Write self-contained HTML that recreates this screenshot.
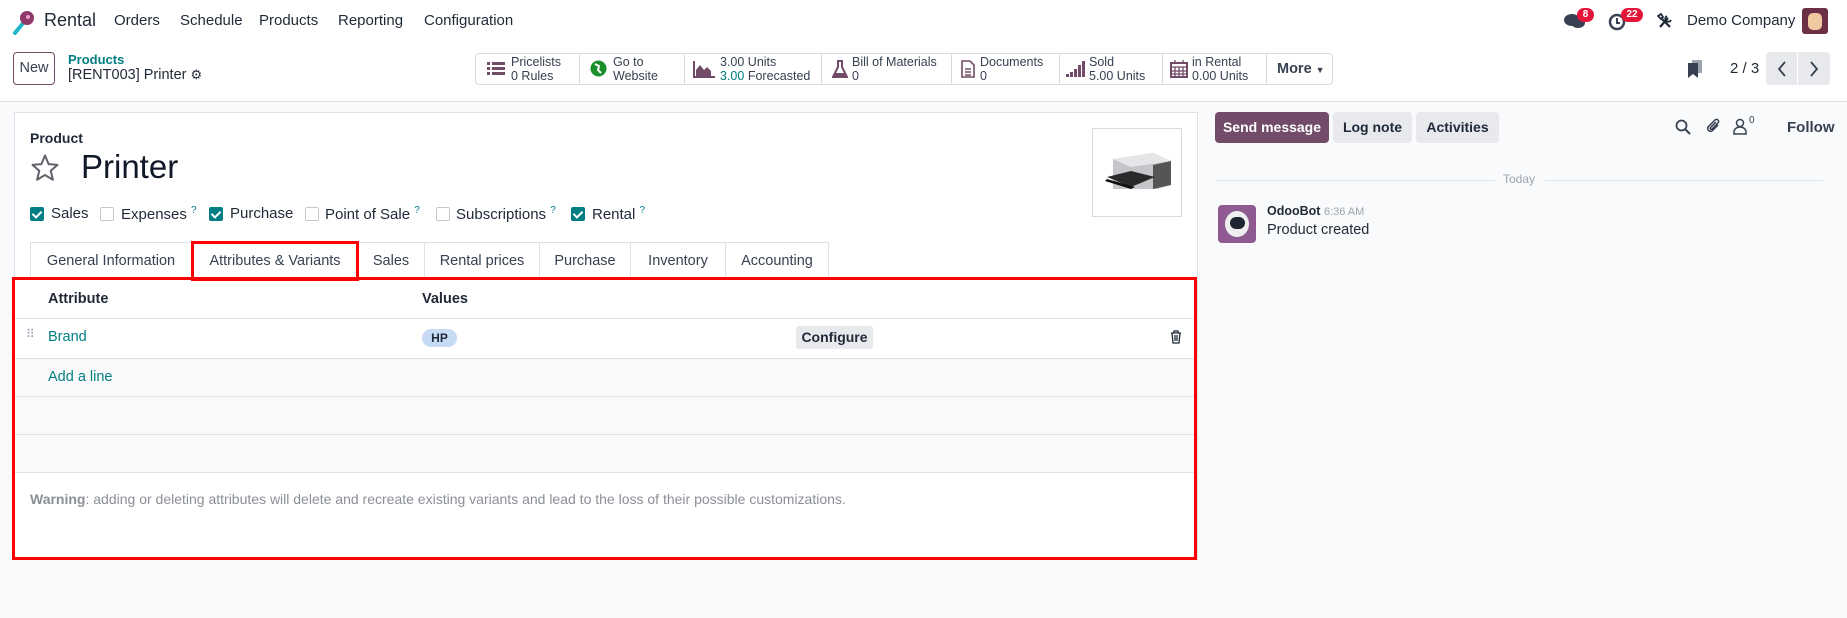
<!DOCTYPE html>
<html><head><meta charset="utf-8"><style>
*{box-sizing:border-box;margin:0;padding:0}
body{width:1847px;height:618px;overflow:hidden;background:#f9fafb;font-family:"Liberation Sans",sans-serif;color:#374151;position:relative;font-size:14.5px}
.a{position:absolute;white-space:nowrap}
.top{position:absolute;left:0;top:0;width:1847px;height:102px;background:#fff;border-bottom:1px solid #dee2e6}
.menu{font-size:15px;color:#1f2937;top:12px}
.stat{position:absolute;top:53px;height:32px;left:475px;width:858px;border:1px solid #d8dadd;border-radius:4px;background:#fff}
.sb{position:absolute;top:0;height:30px;border-left:1px solid #d8dadd;font-size:12.5px;line-height:14px;color:#374151;padding-top:1px}
.sb b{font-weight:normal;display:block}
.sheet{position:absolute;left:14px;top:112px;width:1184px;height:448px;background:#fff;border:1px solid #dee2e6}
.cb{position:absolute;top:207px;width:14px;height:14px;border-radius:2px}
.cb.on{background:#017e84}
.cb.on:after{content:"";position:absolute;left:4px;top:2px;width:4px;height:7px;border:solid #fff;border-width:0 2px 2px 0;transform:rotate(45deg)}
.cb.off{border:1px solid #c4c8cd;background:#fff}
.lbl{top:205px;font-size:15px;color:#1f2937}
.lbl sup{color:#017e84;font-size:10px}
.tab{position:absolute;top:242px;height:37px;border:1px solid #dee2e6;border-bottom:none;font-size:14.5px;color:#374151;text-align:center;line-height:36px;background:#fff}
.row{position:absolute;left:14px;width:1182px;border-bottom:1px solid #dee2e6}
.btn{position:absolute;top:112px;height:31px;border-radius:4px;font-size:14px;font-weight:bold;text-align:center;line-height:31px}
</style></head><body>
<div class="top"></div>
<svg class="a" style="left:12px;top:9px" width="24" height="26" viewBox="0 0 24 26"><path d="M3 24 L12 13" stroke="#21b6c8" stroke-width="4" stroke-linecap="round"/><circle cx="15" cy="9" r="7" fill="#8e3a6b"/><circle cx="16" cy="8" r="2" fill="#f3a0c6"/></svg>
<div class="a" style="left:44px;top:10px;font-size:18px;color:#1f2937">Rental</div>
<div class="a menu" style="left:114px">Orders</div>
<div class="a menu" style="left:180px">Schedule</div>
<div class="a menu" style="left:259px">Products</div>
<div class="a menu" style="left:338px">Reporting</div>
<div class="a menu" style="left:424px">Configuration</div>
<svg class="a" style="left:1563px;top:12px" width="24" height="18" viewBox="0 0 24 18"><ellipse cx="9" cy="8" rx="8" ry="6" fill="#374151"/><ellipse cx="15" cy="11" rx="7" ry="5" fill="#374151"/></svg>
<div class="a" style="left:1577px;top:8px;width:17px;height:14px;border-radius:7px;background:#e4153a;color:#fff;font-size:10px;font-weight:bold;text-align:center;line-height:14px">8</div>
<svg class="a" style="left:1608px;top:13px" width="18" height="18" viewBox="0 0 18 18"><circle cx="9" cy="9" r="7" fill="none" stroke="#374151" stroke-width="2.5"/><path d="M9 5v5h3" stroke="#374151" stroke-width="2" fill="none"/></svg>
<div class="a" style="left:1621px;top:8px;width:22px;height:14px;border-radius:7px;background:#e4153a;color:#fff;font-size:10px;font-weight:bold;text-align:center;line-height:14px">22</div>
<svg class="a" style="left:1657px;top:13px" width="16" height="16" viewBox="0 0 16 16"><path d="M3 14L11 5M13 14L4 5" stroke="#1f2937" stroke-width="2.2"/><path d="M1 3l3-2 2 3-2 2zM10 3a3 3 0 104 4" stroke="#1f2937" stroke-width="1.8" fill="none"/></svg>
<div class="a" style="left:1687px;top:12px;font-size:15px;color:#1f2937">Demo Company</div>
<div class="a" style="left:1802px;top:8px;width:26px;height:26px;border-radius:3px;background:#6b2f46"><div style="margin:5px 6px;width:14px;height:17px;background:#f1c9a0;border-radius:5px"></div></div>
<div class="a" style="left:13px;top:52px;width:42px;height:33px;border:1px solid #714b67;border-radius:4px;font-size:14.5px;color:#374151;text-align:center;line-height:31px">New</div>
<div class="a" style="left:68px;top:52px;font-size:13px;font-weight:bold;color:#017e84">Products</div>
<div class="a" style="left:68px;top:67px;font-size:14.5px;color:#1f2937">[RENT003] Printer <span style="font-size:13px">⚙</span></div>
<div class="stat">
 <div class="sb" style="left:-1px;width:104px;border:none;padding-left:36px"><svg style="position:absolute;left:12px;top:7px" width="18" height="16"><g fill="#714b67"><rect x="0" y="1" width="3" height="3"/><rect x="5" y="1" width="13" height="3"/><rect x="0" y="6" width="3" height="3"/><rect x="5" y="6" width="13" height="3"/><rect x="0" y="11" width="3" height="3"/><rect x="5" y="11" width="13" height="3"/></g></svg><b>Pricelists</b><b>0 Rules</b></div>
 <div class="sb" style="left:103px;width:105px;padding-left:33px"><svg style="position:absolute;left:10px;top:6px" width="17" height="17"><circle cx="8.5" cy="8.5" r="8" fill="#1a8f2c"/><path d="M5 4l4 2-1 4 3 3" stroke="#fff" stroke-width="2" fill="none"/></svg><b>Go to</b><b>Website</b></div>
 <div class="sb" style="left:208px;width:137px;padding-left:35px"><svg style="position:absolute;left:8px;top:7px" width="22" height="17"><path d="M1 0v16h21" stroke="#714b67" stroke-width="2" fill="none"/><path d="M3 15V9l4-5 4 5 3-3 4 4v5z" fill="#714b67"/></svg><b>3.00 Units</b><b><span style="color:#017e84">3.00</span> Forecasted</b></div>
 <div class="sb" style="left:345px;width:130px;padding-left:30px"><svg style="position:absolute;left:10px;top:6px" width="16" height="18"><path d="M5 1h6M6 1v6L1 17h14L10 7V1" stroke="#714b67" stroke-width="2" fill="none"/><path d="M3 13h10l1 3H2z" fill="#714b67"/></svg><b>Bill of Materials</b><b>0</b></div>
 <div class="sb" style="left:475px;width:108px;padding-left:28px"><svg style="position:absolute;left:9px;top:6px" width="14" height="18"><path d="M1 1h8l4 4v12H1z" stroke="#714b67" stroke-width="1.6" fill="none"/><path d="M4 9h6M4 12h6M4 15h6" stroke="#714b67" stroke-width="1.4"/></svg><b>Documents</b><b>0</b></div>
 <div class="sb" style="left:583px;width:103px;padding-left:29px"><svg style="position:absolute;left:6px;top:7px" width="20" height="16"><g fill="#714b67"><rect x="0" y="13" width="3" height="3"/><rect x="4" y="11" width="3" height="5"/><rect x="8" y="8" width="3" height="8"/><rect x="12" y="4" width="3" height="12"/><rect x="16" y="0" width="3" height="16"/></g></svg><b>Sold</b><b>5.00 Units</b></div>
 <div class="sb" style="left:686px;width:104px;padding-left:29px"><svg style="position:absolute;left:7px;top:6px" width="18" height="18"><rect x="1" y="3" width="16" height="14" fill="none" stroke="#714b67" stroke-width="2"/><path d="M1 7h16M5 7v10M9 7v10M13 7v10M1 11h16M1 14h16M5 0v4M13 0v4" stroke="#714b67" stroke-width="1.3"/></svg><b>in Rental</b><b>0.00 Units</b></div>
 <div class="sb" style="left:790px;width:67px;font-size:14.5px;font-weight:bold;line-height:29px;padding-left:10px">More <span style="font-size:9px">▼</span></div>
</div>
<svg class="a" style="left:1687px;top:60px" width="16" height="19"><rect x="5" y="0" width="10" height="13" fill="#9ca3af"/><path d="M1 3h10v15l-5-4-5 4z" fill="#374151"/></svg>
<div class="a" style="left:1730px;top:60px;font-size:15px;color:#1f2937">2 / 3</div>
<div class="a" style="left:1766px;top:52px;width:31px;height:33px;background:#e7e9ed;border-radius:4px 0 0 4px"></div>
<div class="a" style="left:1798px;top:52px;width:32px;height:33px;background:#e7e9ed;border-radius:0 4px 4px 0"></div>
<svg class="a" style="left:1776px;top:61px" width="12" height="16"><path d="M9 1L3 8l6 7" stroke="#374151" stroke-width="1.8" fill="none"/></svg>
<svg class="a" style="left:1808px;top:61px" width="12" height="16"><path d="M3 1l6 7-6 7" stroke="#374151" stroke-width="1.8" fill="none"/></svg>

<div class="sheet"></div>
<div class="a" style="left:30px;top:130px;font-size:14px;font-weight:bold;color:#1f2937">Product</div>
<svg class="a" style="left:30px;top:153px" width="30" height="30" viewBox="0 0 24 24"><path d="M12 2l2.9 6.9 7.1.6-5.4 4.7 1.7 7.2L12 17.6 5.7 21.4l1.7-7.2L2 9.5l7.1-.6z" fill="none" stroke="#5f636a" stroke-width="1.6" stroke-linejoin="round"/></svg>
<div class="a" style="left:81px;top:148px;font-size:33px;color:#111827">Printer</div>
<div class="a" style="left:1092px;top:128px;width:90px;height:89px;border:1px solid #d8dadd;background:#fff">
 <svg width="88" height="87" viewBox="0 0 88 87"><path d="M20 30l40-6 18 8v24l-14 4H20z" fill="#c4c6c9"/><path d="M20 30l40-6 18 8-40 6z" fill="#e5e6e8"/><path d="M60 36l18-4v24l-18 4z" fill="#555"/><path d="M14 48l24-6 24 6-24 10z" fill="#2a2a2a"/><path d="M12 52l26 8 4-2-28-8z" fill="#111"/></svg>
</div>
<div class="cb on" style="left:30px"></div><div class="a lbl" style="left:51px">Sales</div>
<div class="cb off" style="left:100px"></div><div class="a lbl" style="left:121px">Expenses <sup>?</sup></div>
<div class="cb on" style="left:209px"></div><div class="a lbl" style="left:230px">Purchase</div>
<div class="cb off" style="left:305px"></div><div class="a lbl" style="left:325px">Point of Sale <sup>?</sup></div>
<div class="cb off" style="left:436px"></div><div class="a lbl" style="left:456px">Subscriptions <sup>?</sup></div>
<div class="cb on" style="left:571px"></div><div class="a lbl" style="left:592px">Rental <sup>?</sup></div>
<div class="tab" style="left:30px;width:162px">General Information</div>
<div class="tab" style="left:192px;width:166px">Attributes &amp; Variants</div>
<div class="tab" style="left:357px;width:68px">Sales</div>
<div class="tab" style="left:424px;width:116px">Rental prices</div>
<div class="tab" style="left:539px;width:92px">Purchase</div>
<div class="tab" style="left:630px;width:96px">Inventory</div>
<div class="tab" style="left:725px;width:104px">Accounting</div>
<div class="a" style="left:191px;top:241px;width:168px;height:40px;border:3px solid #f00"></div>
<div class="row" style="top:278px;height:41px"></div>
<div class="a" style="left:48px;top:291px;font-size:14.5px;font-weight:bold;color:#1f2937">Attribute</div>
<div class="a" style="left:422px;top:291px;font-size:14.5px;font-weight:bold;color:#1f2937">Values</div>
<div class="row" style="top:319px;height:40px"></div>
<div class="a" style="left:26px;top:331px;color:#9ca3af;font-size:12px;line-height:6px">⠿</div>
<div class="a" style="left:48px;top:329px;color:#017e84;font-size:14.5px">Brand</div>
<div class="a" style="left:422px;top:329px;width:35px;height:18px;border-radius:9px;background:#c7dbf5;font-size:12px;font-weight:bold;text-align:center;line-height:18px;color:#1f2937">HP</div>
<div class="a" style="left:796px;top:326px;width:77px;height:23px;border-radius:3px;background:#e7e9ed;font-size:14px;font-weight:bold;text-align:center;line-height:23px;color:#1f2937">Configure</div>
<svg class="a" style="left:1170px;top:330px" width="12" height="14"><path d="M1 3h10M4 3V1h4v2M2 3l1 10h6l1-10M5 5v6M7 5v6" stroke="#1f2937" stroke-width="1.3" fill="none"/></svg>
<div class="row" style="top:359px;height:38px;background:#fafafa"></div>
<div class="a" style="left:48px;top:369px;color:#017e84;font-size:14.5px">Add a line</div>
<div class="row" style="top:397px;height:38px;background:#fafafa"></div>
<div class="row" style="top:435px;height:38px;background:#fafafa"></div>
<div class="a" style="left:30px;top:491px;font-size:14px;color:#8b8f96"><b>Warning</b>: adding or deleting attributes will delete and recreate existing variants and lead to the loss of their possible customizations.</div>
<div class="a" style="left:12px;top:277px;width:1185px;height:283px;border:3px solid #f00"></div>

<div class="btn" style="left:1215px;width:114px;background:#714b67;color:#fff">Send message</div>
<div class="btn" style="left:1333px;width:79px;background:#e7e9ed;color:#1f2937">Log note</div>
<div class="btn" style="left:1416px;width:83px;background:#e7e9ed;color:#1f2937">Activities</div>
<svg class="a" style="left:1675px;top:119px" width="16" height="16"><circle cx="6.5" cy="6.5" r="5" fill="none" stroke="#374151" stroke-width="1.8"/><path d="M10 10l5 5" stroke="#374151" stroke-width="2"/></svg>
<svg class="a" style="left:1705px;top:117px" width="16" height="18"><path d="M13 8L7 14a3 3 0 01-4-4l7-7a2 2 0 013 3l-6 6a1 1 0 01-1.5-1.5L11 5" stroke="#374151" stroke-width="1.5" fill="none"/></svg>
<svg class="a" style="left:1733px;top:118px" width="14" height="17"><circle cx="7" cy="5" r="3.5" fill="none" stroke="#374151" stroke-width="1.5"/><path d="M1 16v-2a6 5 0 0112 0v2z" fill="none" stroke="#374151" stroke-width="1.5"/></svg>
<div class="a" style="left:1749px;top:115px;font-size:10px;color:#374151">0</div>
<div class="a" style="left:1787px;top:119px;font-size:15px;font-weight:bold;color:#374151">Follow</div>
<div class="a" style="left:1215px;top:180px;width:280px;border-top:1px solid #dee2e6"></div>
<div class="a" style="left:1545px;top:180px;width:278px;border-top:1px solid #dee2e6"></div>
<div class="a" style="left:1503px;top:172px;font-size:12px;color:#9ca3af">Today</div>
<div class="a" style="left:1218px;top:205px;width:38px;height:38px;border-radius:4px;background:#8f5a92"><div style="margin:6px 7px;width:24px;height:26px;border-radius:50%;background:#eee"><div style="margin:0 auto;position:relative;top:6px;width:15px;height:12px;border-radius:6px;background:#1d2530"></div></div></div>
<div class="a" style="left:1267px;top:204px;font-size:12.5px;font-weight:bold;color:#1f2937">OdooBot <span style="font-weight:normal;font-size:11px;color:#9ca3af">6:36 AM</span></div>
<div class="a" style="left:1267px;top:222px;font-size:14.5px;color:#1f2937">Product created</div>
</body></html>
